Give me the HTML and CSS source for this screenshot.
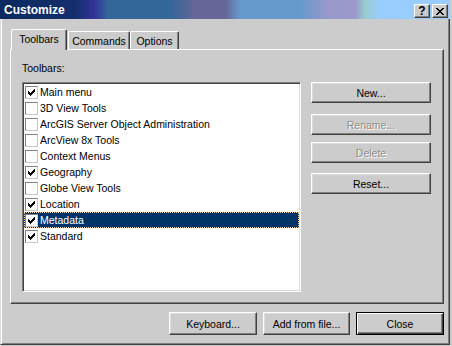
FILE: index.html
```html
<!DOCTYPE html>
<html>
<head>
  <meta charset="UTF-8">
  <title>Customize</title>
  <link rel="stylesheet" href="styles.css">
</head>
<body>
  <div class="window">
    <div class="titlebar">
      <span class="title">Customize</span>
      <div class="caption-btns">
        <span class="cap-btn help">?</span>
        <span class="cap-btn">
          <svg width="8" height="7" viewBox="0 0 8 7" shape-rendering="crispEdges"><path d="M0 0h2v1H0zM6 0h2v1H6zM1 1h2v1H1zM5 1h2v1H5zM2 2h4v1H2zM3 3h2v1H3zM2 4h4v1H2zM1 5h2v1H1zM5 5h2v1H5zM0 6h2v1H0zM6 6h2v1H6z" fill="#000"/></svg>
        </span>
      </div>
    </div>
    <div class="frame">
      <div class="tabs">
        <div class="tab active">Toolbars</div>
        <div class="tab tab-commands">Commands</div>
        <div class="tab tab-options">Options</div>
      </div>
      <div class="panel">
        <div class="list-col">
          <div class="label">Toolbars:</div>
          <div class="listbox">
            <div class="item"><span class="check"><svg width="7" height="7" viewBox="0 0 7 7" shape-rendering="crispEdges"><path d="M0 2h1v3H0zM1 3h1v3H1zM2 4h1v3H2zM3 3h1v3H3zM4 2h1v3H4zM5 1h1v3H5zM6 0h1v3H6z"/></svg></span>Main menu</div>
            <div class="item"><span class="check"></span>3D View Tools</div>
            <div class="item"><span class="check"></span>ArcGIS Server Object Administration</div>
            <div class="item"><span class="check"></span>ArcView 8x Tools</div>
            <div class="item"><span class="check"></span>Context Menus</div>
            <div class="item"><span class="check"><svg width="7" height="7" viewBox="0 0 7 7" shape-rendering="crispEdges"><path d="M0 2h1v3H0zM1 3h1v3H1zM2 4h1v3H2zM3 3h1v3H3zM4 2h1v3H4zM5 1h1v3H5zM6 0h1v3H6z"/></svg></span>Geography</div>
            <div class="item"><span class="check"></span>Globe View Tools</div>
            <div class="item"><span class="check"><svg width="7" height="7" viewBox="0 0 7 7" shape-rendering="crispEdges"><path d="M0 2h1v3H0zM1 3h1v3H1zM2 4h1v3H2zM3 3h1v3H3zM4 2h1v3H4zM5 1h1v3H5zM6 0h1v3H6z"/></svg></span>Location</div>
            <div class="item selected"><span class="check"><svg width="7" height="7" viewBox="0 0 7 7" shape-rendering="crispEdges"><path d="M0 2h1v3H0zM1 3h1v3H1zM2 4h1v3H2zM3 3h1v3H3zM4 2h1v3H4zM5 1h1v3H5zM6 0h1v3H6z"/></svg></span>Metadata</div>
            <div class="item"><span class="check"><svg width="7" height="7" viewBox="0 0 7 7" shape-rendering="crispEdges"><path d="M0 2h1v3H0zM1 3h1v3H1zM2 4h1v3H2zM3 3h1v3H3zM4 2h1v3H4zM5 1h1v3H5zM6 0h1v3H6z"/></svg></span>Standard</div>
          </div>
        </div>
        <div class="side-btns">
          <button class="btn">New...</button>
          <button class="btn btn-rename" disabled>Rename...</button>
          <button class="btn btn-delete" disabled>Delete</button>
          <button class="btn btn-reset">Reset...</button>
        </div>
      </div>
      <div class="footer">
        <button class="btn btn-keyboard">Keyboard...</button>
        <button class="btn btn-add">Add from file...</button>
        <button class="btn btn-close">Close</button>
      </div>
    </div>
  </div>
</body>
</html>
```

FILE: styles.css
```css
body {
  margin: 0;
  background: #cccccc;
  font-family: "Liberation Sans", Arial, sans-serif;
  font-size: 10.5px;
  color: #000;
}
.window {
  width: 450px;
  height: 345px;
}
.titlebar {
  height: 19px;
  display: flex;
  align-items: center;
  justify-content: space-between;
  background: linear-gradient(to right, #0b2b60 0, #142f6c 75px, #333399 95px, #336699 108px, #336699 170px, #666699 195px, #666699 225px, #6699cc 240px, #6699cc 300px, #9999cc 328px, #9999cc 355px, #99cccc 365px, #99ccff 380px);
}
.title {
  color: #fff;
  font-weight: bold;
  font-size: 12px;
  padding-left: 4px;
}
.caption-btns {
  display: flex;
  gap: 2px;
  align-self: flex-start;
  margin-top: 4px;
  margin-right: 2px;
}
.cap-btn {
  width: 16px;
  height: 14px;
  box-sizing: border-box;
  background: #cccccc;
  border: 1px solid;
  border-color: #fff #404040 #404040 #fff;
  box-shadow: inset -1px -1px #808080;
  display: flex;
  align-items: center;
  justify-content: center;
}
.cap-btn.help {
  font-weight: bold;
  font-size: 12px;
  line-height: 12px;
}
.frame {
  height: 326px;
  box-sizing: border-box;
  border-style: solid;
  border-width: 0 1px 1px 1px;
  border-color: #cccccc #404040 #404040 #dcdcdc;
  box-shadow: inset 1px 0 #fff, inset -1px -1px #808080;
  padding-top: 10px;
}
.tabs {
  display: flex;
  align-items: flex-end;
  margin-left: 10px;
  height: 20px;
  position: relative;
  z-index: 1;
}
.tab {
  box-sizing: border-box;
  height: 18px;
  border: 1px solid;
  border-bottom: none;
  border-color: #fff #404040 #fff #fff;
  box-shadow: inset -1px 0 #808080;
  border-radius: 2px 2px 0 0;
  background: #cccccc;
  display: flex;
  align-items: center;
  justify-content: center;
}
.tab.active {
  width: 56px;
  height: 21px;
  margin-bottom: -1px;
  padding-bottom: 2px;
}
.tab-commands {
  width: 62px;
  margin-left: 1px;
}
.tab-options {
  width: 49px;
}
.panel {
  width: 434px;
  height: 255px;
  box-sizing: border-box;
  margin-left: 9px;
  border: 1px solid;
  border-color: #fff #404040 #404040 #fff;
  box-shadow: inset -1px -1px #808080;
  display: flex;
  gap: 10px;
  padding: 12px 0 0 11px;
}
.label {
  height: 13px;
  line-height: 13px;
  margin-bottom: 7px;
}
.listbox {
  width: 279px;
  height: 210px;
  box-sizing: border-box;
  background: #fff;
  border: 1px solid;
  border-color: #808080 #fff #fff #808080;
  box-shadow: inset 1px 1px #404040, inset -1px -1px #dcdcdc;
  padding: 1px;
}
.item {
  height: 16px;
  display: flex;
  align-items: center;
  padding-left: 1px;
  white-space: nowrap;
}
.item.selected {
  background: #003366;
  color: #fff;
  outline: 1px dotted #ffcc99;
  outline-offset: -1px;
}
.check {
  width: 13px;
  height: 13px;
  box-sizing: border-box;
  background: #fff;
  border: 1px solid;
  border-color: #808080 #c8c8c8 #c8c8c8 #808080;
  margin-right: 2px;
  display: flex;
  align-items: center;
  justify-content: center;
}
.check svg {
  fill: #000;
}
.side-btns {
  display: flex;
  flex-direction: column;
  padding-top: 20px;
}
.btn {
  box-sizing: border-box;
  width: 120px;
  height: 21px;
  padding: 0;
  font: inherit;
  color: #000;
  background: #cccccc;
  border: 1px solid;
  border-color: #fff #404040 #404040 #fff;
  box-shadow: inset -1px -1px #808080, inset 1px 1px #dcdcdc;
}
.btn:disabled {
  color: #8c8c8c;
  text-shadow: 1px 1px #fff;
}
.btn-rename {
  margin-top: 11px;
}
.btn-delete {
  margin-top: 7px;
}
.btn-reset {
  margin-top: 10px;
}
.footer {
  display: flex;
  justify-content: flex-end;
  gap: 6px;
  width: 443px;
  margin-top: 8px;
}
.footer .btn {
  height: 23px;
  width: 88px;
}
.footer .btn-add {
  width: 87px;
}
.footer .btn-close {
  border-color: #000;
  box-shadow: inset 1px 1px #fff, inset -1px -1px #404040, inset -2px -2px #808080;
}
```
